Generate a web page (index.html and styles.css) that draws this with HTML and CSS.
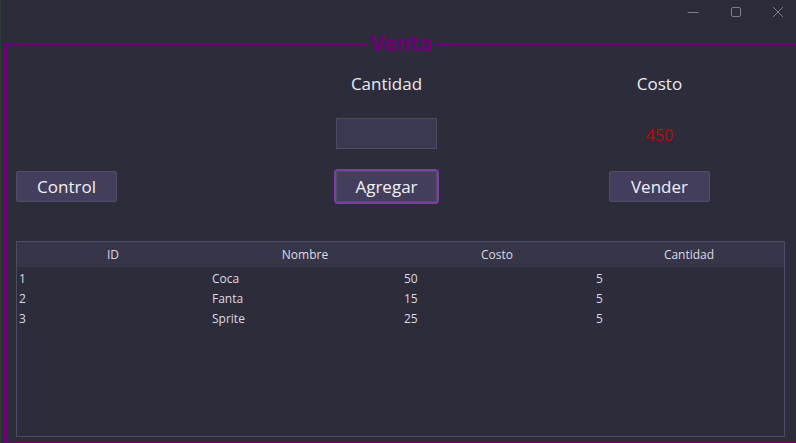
FILE: index.html
```html
<!DOCTYPE html>
<html lang="es">
<head>
<meta charset="utf-8">
<title>Venta</title>
<link rel="stylesheet" href="styles.css">
</head>
<body>
<div class="window">
  <div class="titlebar">
    <span class="tb-btn">
      <svg width="12" height="12" viewBox="0 0 12 12"><path d="M0.5 6.5H11.5" stroke="#7d7c8e" stroke-width="1"/></svg>
    </span>
    <span class="tb-btn">
      <svg width="12" height="12" viewBox="0 0 12 12"><rect x="1.5" y="1.5" width="9" height="9" rx="1.5" fill="none" stroke="#7d7c8e" stroke-width="1"/></svg>
    </span>
    <span class="tb-btn">
      <svg width="12" height="12" viewBox="0 0 12 12"><path d="M1 1L11 11M11 1L1 11" stroke="#7d7c8e" stroke-width="1"/></svg>
    </span>
  </div>
  <div class="group">
    <div class="legend">Venta</div>
    <div class="form">
      <div class="cell"></div>
      <div class="cell label">Cantidad</div>
      <div class="cell label">Costo</div>

      <div class="cell"></div>
      <div class="cell"><input class="field" type="text"></div>
      <div class="cell total">450</div>

      <div class="cell"><button class="btn">Control</button></div>
      <div class="cell"><button class="btn focus">Agregar</button></div>
      <div class="cell"><button class="btn">Vender</button></div>
    </div>
    <div class="table">
      <div class="thead">
        <div>ID</div><div>Nombre</div><div>Costo</div><div>Cantidad</div>
      </div>
      <div class="row"><div>1</div><div>Coca</div><div>50</div><div>5</div></div>
      <div class="row"><div>2</div><div>Fanta</div><div>15</div><div>5</div></div>
      <div class="row"><div>3</div><div>Sprite</div><div>25</div><div>5</div></div>
    </div>
  </div>
</div>
</body>
</html>
```
FILE: styles.css
```css
html, body {
  margin: 0;
  padding: 0;
  background: #2d2c3b;
  overflow: hidden;
}
body {
  width: 796px;
  height: 443px;
  font-family: "Open Sans", "Noto Sans", sans-serif;
  color: #ecebf2;
}
.window {
  height: 443px;
  border-left: 1px solid #2f3d34;
  box-sizing: border-box;
}
.titlebar {
  height: 30px;
  display: flex;
  justify-content: flex-end;
  align-items: center;
  padding-right: 12px;
}
.tb-btn {
  width: 12px;
  height: 12px;
  display: flex;
  margin-bottom: 6px;
}
.tb-btn + .tb-btn { margin-left: 31px; }
.tb-btn:last-child { margin-left: 30px; }
.group {
  position: relative;
  margin-top: 13px;
  margin-left: 3px;
  width: 820px;
  height: 402px;
  border: 3px solid #6c0070;
  border-right: none;
  box-sizing: border-box;
}
.legend {
  position: absolute;
  left: 360px;
  top: -15px;
  padding: 0 3px;
  background: #2d2c3b;
  color: #6a0570;
  font-family: "DejaVu Sans", sans-serif;
  font-stretch: condensed;
  font-weight: bold;
  font-size: 22px;
  line-height: 26px;
  letter-spacing: -0.4px;
}
.form {
  display: grid;
  grid-template-columns: 320px 273px 101px;
  grid-template-rows: 40px 60px 47px;
  padding-left: 9px;
  padding-top: 17px;
}
.cell {
  width: 101px;
  display: flex;
  align-items: center;
  justify-content: center;
}
.label {
  font-size: 17px;
}
.total {
  color: #c8000a;
  font-size: 16px;
  padding-top: 4px;
}
.field {
  width: 101px;
  height: 31px;
  box-sizing: border-box;
  background: #3b3851;
  border: 1px solid #4d4a63;
  margin: 0;
  padding: 0;
  outline: none;
}
.btn {
  width: 101px;
  height: 31px;
  box-sizing: border-box;
  background: #433e5c;
  border: 1px solid #524d6b;
  border-radius: 2px;
  color: #f2f1f7;
  font-family: "Open Sans", "Noto Sans", sans-serif;
  font-size: 17px;
  padding: 0;
  margin: 0;
}
.btn.focus {
  outline: 2px solid #7b3fa3;
  outline-offset: 0;
}
.table {
  margin-top: 31px;
  margin-left: 9px;
  width: 769px;
  height: 196px;
  box-sizing: border-box;
  border: 1px solid #4e4b66;
  font-size: 12px;
  color: #dcdbe6;
}
.thead {
  display: grid;
  grid-template-columns: repeat(4, 192px);
  height: 25px;
  background: #373548;
  align-items: center;
  text-align: center;
}
.row {
  display: grid;
  grid-template-columns: repeat(4, 192px);
  height: 20px;
  align-items: center;
}
.row div {
  padding-left: 3px;
}
.row div:first-child {
  padding-left: 2px;
}
.thead + .row { margin-top: 1px; }
```
